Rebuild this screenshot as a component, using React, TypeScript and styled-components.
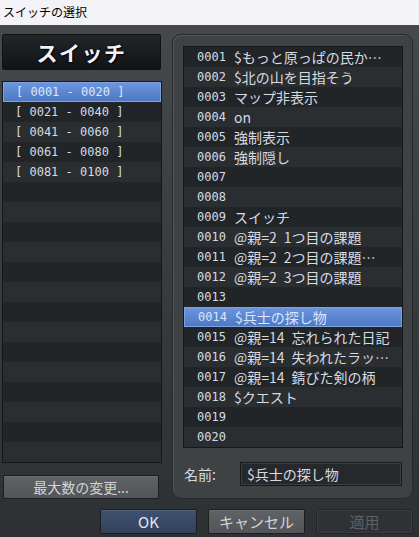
import React from "react";
import styled, { createGlobalStyle } from "styled-components";

const Global = createGlobalStyle`
  html, body { margin: 0; padding: 0; }
  body { width: 419px; height: 537px; overflow: hidden; font-family: "Noto Sans CJK JP", "Noto Sans", sans-serif; }
`;

const Window = styled.div`
  width: 419px;
  height: 537px;
  display: flex;
  flex-direction: column;
`;

const TitleBar = styled.div`
  height: 25px;
  background: #f3f2f7;
  color: #000;
  font-size: 12px;
  line-height: 24px;
  padding-left: 3px;
  box-sizing: border-box;
`;

const Body = styled.div`
  flex: 1;
  background: linear-gradient(#46494c, #36393c 60%, #2e3134);
  display: flex;
  flex-direction: column;
  padding: 9px 6px 0 2px;
`;

const Main = styled.div`
  display: flex;
  gap: 11px;
`;

const LeftCol = styled.div`
  width: 159px;
  display: flex;
  flex-direction: column;
`;

const Header = styled.div`
  height: 36px;
  flex: none;
  box-sizing: border-box;
  border: 1px solid #0f1113;
  border-radius: 2px;
  background: linear-gradient(#23262a, #111315);
  display: flex;
  align-items: center;
  justify-content: center;
  color: #eef3fa;
  font-size: 21px;
  font-weight: 700;
  letter-spacing: 1.5px;
  text-shadow: 0 0 2px #000, 1px 1px 1px #000;
`;

const List = styled.div<{ $w: number }>`
  width: ${(p) => p.$w}px;
  flex: none;
  box-sizing: border-box;
  border: 1px solid #15171a;
  background: #26292c;
  display: flex;
  flex-direction: column;
`;

const LeftList = styled(List)`
  margin-top: 11px;
`;

const Row = styled.div<{ $sel?: boolean; $odd?: boolean }>`
  height: 20px;
  flex: none;
  box-sizing: border-box;
  display: flex;
  align-items: center;
  white-space: pre;
  color: ${(p) => (p.$sel ? "#dbe6fb" : "#d6dbe2")};
  background: ${(p) =>
    p.$sel
      ? "linear-gradient(#6c95de, #4f78c4)"
      : p.$odd
      ? "#222528"
      : "#2b2e31"};
  border: ${(p) => (p.$sel ? "1px solid #7ea2e2" : "none")};
`;

const Mono = styled.span`
  font-family: "DejaVu Sans Mono", monospace;
  font-size: 12px;
`;

const RangeRow = styled(Row)`
  padding-left: 12px;
`;

const VarRow = styled(Row)`
  padding-left: 13px;
`;

const Name = styled.span`
  margin-left: 8px;
  font-size: 14px;
  word-spacing: 4px;
  font-family: "Noto Sans CJK JP", sans-serif;
`;

const Button = styled.button<{ $kind?: "primary" | "normal" | "disabled" }>`
  box-sizing: border-box;
  height: 24px;
  border-radius: 2px;
  font-family: "Noto Sans CJK JP", sans-serif;
  font-size: 14px;
  padding: 0;
  border: 1px solid
    ${(p) => (p.$kind === "disabled" ? "#222427" : "#1c1e20")};
  color: ${(p) =>
    p.$kind === "disabled" ? "#5d6064" : p.$kind === "primary" ? "#e3e8f0" : "#d0d3d6"};
  background: ${(p) =>
    p.$kind === "primary"
      ? "linear-gradient(#3f5170, #33425c)"
      : p.$kind === "disabled"
      ? "#2f3235"
      : "linear-gradient(#606366, #525558)"};
  box-shadow: ${(p) =>
    p.$kind === "disabled" ? "inset 0 0 0 1px #3a3d40" : "inset 0 1px 0 rgba(255,255,255,0.08)"};
`;

const MaxButton = styled(Button)`
  margin-top: 12px;
  margin-left: 1px;
  width: 156px;
  height: 24px;
  flex: none;
`;

const Panel = styled.div`
  width: 242px;
  height: 465px;
  box-sizing: border-box;
  border: 1px solid #26282b;
  border-radius: 9px;
  background: #3f4245;
  box-shadow: inset 1px 1px 0 #55585b;
  padding: 11px 0 0 10px;
  display: flex;
  flex-direction: column;
`;

const NameRow = styled.div`
  display: flex;
  align-items: center;
  margin-top: 14px;
  padding-left: 1px;
`;

const Label = styled.span`
  color: #d6dbe0;
  font-size: 14px;
  width: 56px;
`;

const Input = styled.div`
  width: 162px;
  height: 24px;
  box-sizing: border-box;
  border: 1px solid #17191b;
  box-shadow: inset 0 0 0 1px #3b3e41;
  background: #26292c;
  color: #d6dbe2;
  font-size: 14px;
  display: flex;
  align-items: center;
  padding-left: 6px;
`;

const Footer = styled.div`
  display: flex;
  justify-content: flex-end;
  gap: 11px;
  margin-top: 10px;
`;

const FooterButton = styled(Button)`
  width: 97px;
  height: 25px;
  font-size: 15px;
`;

const ranges = ["0001 - 0020", "0021 - 0040", "0041 - 0060", "0061 - 0080", "0081 - 0100"];

const names = [
  "$もっと原っぱの民か…",
  "$北の山を目指そう",
  "マップ非表示",
  "on",
  "強制表示",
  "強制隠し",
  "",
  "",
  "スイッチ",
  "@親=2 1つ目の課題",
  "@親=2 2つ目の課題…",
  "@親=2 3つ目の課題",
  "",
  "$兵士の探し物",
  "@親=14 忘れられた日記",
  "@親=14 失われたラッ…",
  "@親=14 錆びた剣の柄",
  "$クエスト",
  "",
  "",
];

export default function App() {
  return (
    <Window>
      <Global />
      <TitleBar>スイッチの選択</TitleBar>
      <Body>
        <Main>
          <LeftCol>
            <Header>スイッチ</Header>
            <LeftList $w={160}>
              {Array.from({ length: 19 }).map((_, i) => (
                <RangeRow key={i} $sel={i === 0} $odd={i % 2 === 1}>
                  {ranges[i] ? <Mono>{`[ ${ranges[i]} ]`}</Mono> : null}
                </RangeRow>
              ))}
            </LeftList>
            <MaxButton>最大数の変更...</MaxButton>
          </LeftCol>
          <Panel>
            <List $w={220}>
              {names.map((n, i) => (
                <VarRow key={i} $sel={i === 13} $odd={i % 2 === 0}>
                  <Mono>{String(i + 1).padStart(4, "0")}</Mono>
                  {n ? <Name>{n}</Name> : null}
                </VarRow>
              ))}
            </List>
            <NameRow>
              <Label>名前:</Label>
              <Input>$兵士の探し物</Input>
            </NameRow>
          </Panel>
        </Main>
        <Footer>
          <FooterButton $kind="primary">OK</FooterButton>
          <FooterButton>キャンセル</FooterButton>
          <FooterButton $kind="disabled">適用</FooterButton>
        </Footer>
      </Body>
    </Window>
  );
}
